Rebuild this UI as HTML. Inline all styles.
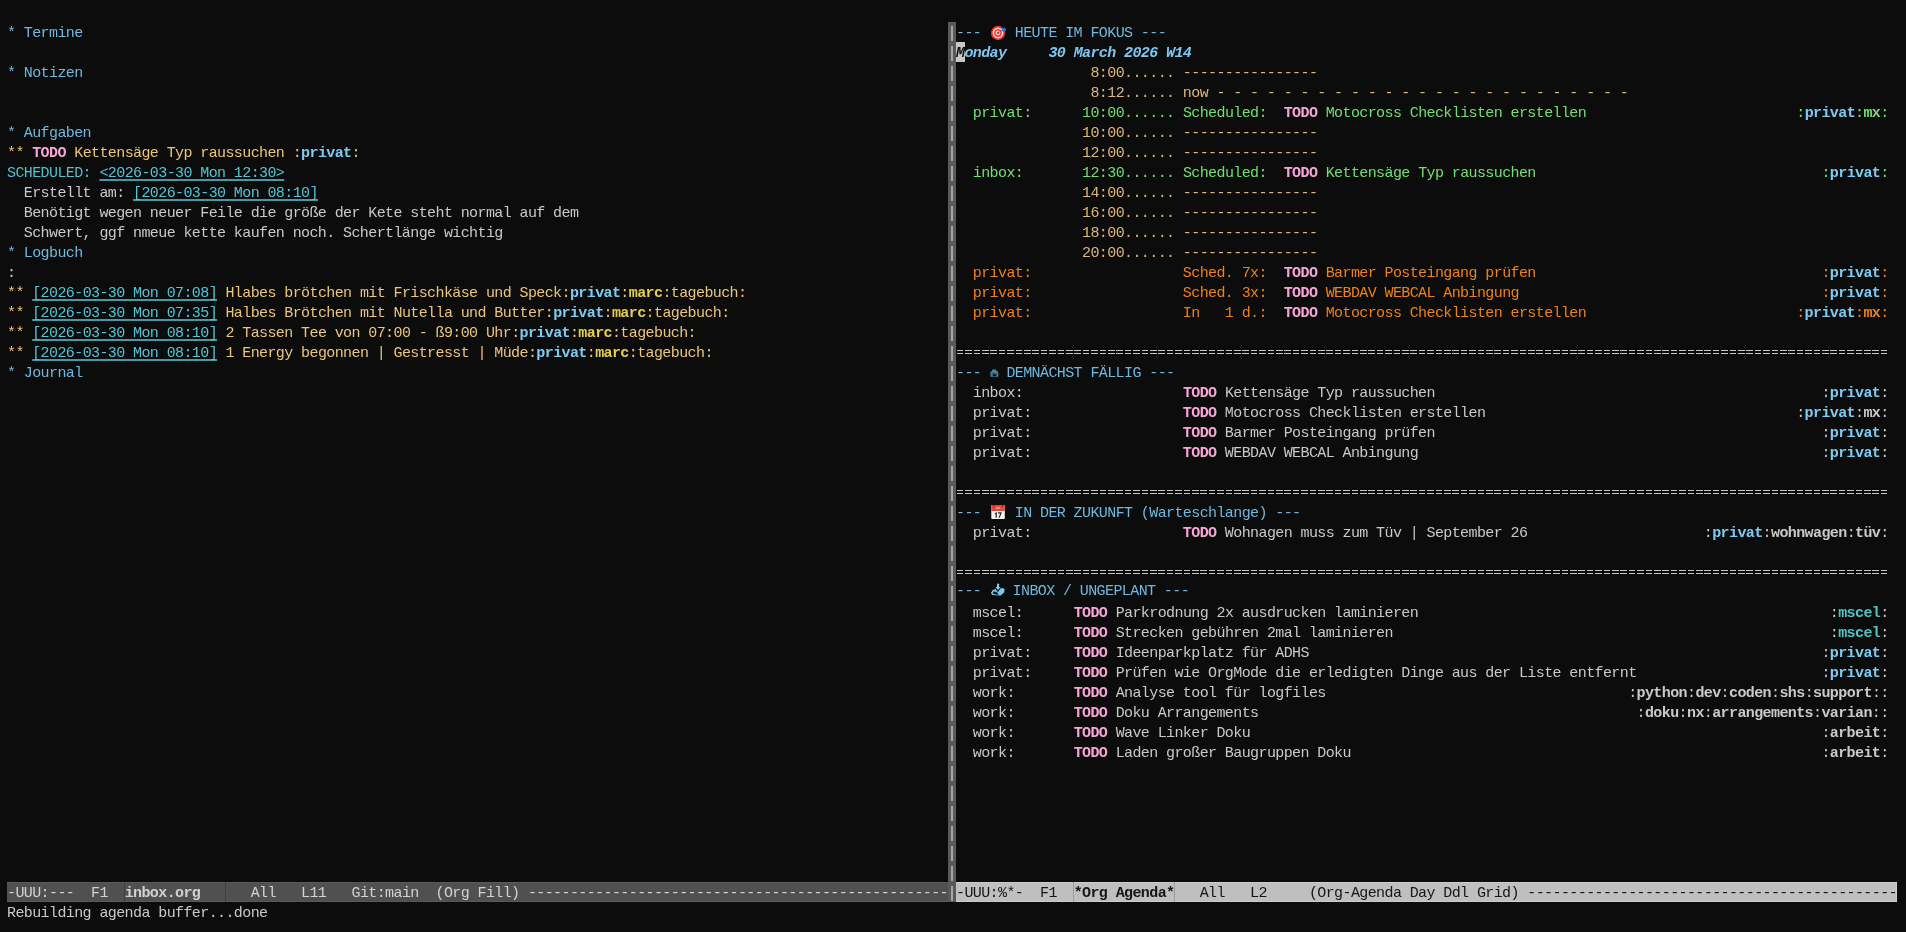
<!DOCTYPE html>
<html><head><meta charset="utf-8"><style>
html,body{margin:0;padding:0;}
body{width:1906px;height:932px;overflow:hidden;background:#0c0c0c;position:relative;font-family:"Liberation Mono",monospace;}
.row{position:absolute;will-change:transform;height:20px;line-height:20px;white-space:pre;font-size:15px;letter-spacing:-0.6px;color:#c9c9c9;padding-top:2px;box-sizing:border-box;}
.emo{display:inline-block;height:20px;vertical-align:top;position:relative;}
.emo svg{position:absolute;left:0;top:-2px;}
.cur{background:#c8c8c8;color:#0c0c0c;font-weight:bold;font-style:italic;}
.eq{position:absolute;left:956px;width:932.4px;height:1px;background:repeating-linear-gradient(to right,transparent 0,transparent 0.9px,#c8c8c8 0.9px,#c8c8c8 7.5px,transparent 7.5px,transparent 8.4px);}
#div{position:absolute;left:948px;top:22px;width:8px;height:880px;background:#595959;}
.dseg{position:absolute;left:951px;width:2px;height:15px;background:#a6a6a6;}
.ml{position:absolute;top:882px;height:20px;}
#mlL{left:7px;width:941px;background:#505050;color:#d2d2d2;box-shadow:inset 0 1px #5a5a5a,inset 0 -1px #5a5a5a;}
#mlR{left:956px;width:941px;background:#bfbfbf;color:#161616;box-shadow:inset 0 1px #cccccc,inset 0 -1px #cccccc,inset -1px 0 #cccccc;}
.sep{position:absolute;top:0;width:1px;height:20px;}
#mlL .sep{background:#404040;}
#mlR .sep{background:#9c9c9c;}
</style></head><body>
<div style="position:absolute;left:956px;top:42px;width:9px;height:20px;background:#c8c8c8"></div>
<div class="row" style="top:22px;left:7px;"><span style="color:#6fb8df">* Termine</span></div>
<div class="row" style="top:62px;left:7px;"><span style="color:#6fb8df">* Notizen</span></div>
<div class="row" style="top:122px;left:7px;"><span style="color:#6fb8df">* Aufgaben</span></div>
<div class="row" style="top:142px;left:7px;"><span style="color:#ecc679">** </span><span style="color:#f7a6d6;font-weight:bold">TODO</span><span style="color:#ecc679"> Kettensäge Typ raussuchen </span><span style="color:#ecc679">:</span><span style="color:#7ccbf3;font-weight:bold">privat</span><span style="color:#ecc679">:</span></div>
<div class="row" style="top:162px;left:7px;"><span style="color:#4ec2ce">SCHEDULED:</span> <span style="color:#52c6d6;text-decoration:underline;text-decoration-thickness:2px;text-underline-offset:2px;text-decoration-color:#3f9ca9;text-decoration-skip-ink:none">&lt;2026-03-30 Mon 12:30&gt;</span></div>
<div class="row" style="top:182px;left:7px;"><span style="color:#c9c9c9">  Erstellt am: </span><span style="color:#52c6d6;text-decoration:underline;text-decoration-thickness:2px;text-underline-offset:2px;text-decoration-color:#3f9ca9;text-decoration-skip-ink:none">[2026-03-30 Mon 08:10]</span></div>
<div class="row" style="top:202px;left:7px;"><span style="color:#c9c9c9">  Benötigt wegen neuer Feile die größe der Kete steht normal auf dem</span></div>
<div class="row" style="top:222px;left:7px;"><span style="color:#c9c9c9">  Schwert, ggf nmeue kette kaufen noch. Schertlänge wichtig</span></div>
<div class="row" style="top:242px;left:7px;"><span style="color:#6fb8df">* Logbuch</span></div>
<div class="row" style="top:262px;left:7px;"><span style="color:#c9c9c9">:</span></div>
<div class="row" style="top:282px;left:7px;"><span style="color:#ecc679">** </span><span style="color:#52c6d6;text-decoration:underline;text-decoration-thickness:2px;text-underline-offset:2px;text-decoration-color:#3f9ca9;text-decoration-skip-ink:none">[2026-03-30 Mon 07:08]</span><span style="color:#ecc679"> Hlabes brötchen mit Frischkäse und Speck</span><span style="color:#ecc679">:</span><span style="color:#7ccbf3;font-weight:bold">privat</span><span style="color:#ecc679">:</span><span style="color:#e6cf4c;font-weight:bold">marc</span><span style="color:#ecc679">:tagebuch:</span></div>
<div class="row" style="top:302px;left:7px;"><span style="color:#ecc679">** </span><span style="color:#52c6d6;text-decoration:underline;text-decoration-thickness:2px;text-underline-offset:2px;text-decoration-color:#3f9ca9;text-decoration-skip-ink:none">[2026-03-30 Mon 07:35]</span><span style="color:#ecc679"> Halbes Brötchen mit Nutella und Butter</span><span style="color:#ecc679">:</span><span style="color:#7ccbf3;font-weight:bold">privat</span><span style="color:#ecc679">:</span><span style="color:#e6cf4c;font-weight:bold">marc</span><span style="color:#ecc679">:tagebuch:</span></div>
<div class="row" style="top:322px;left:7px;"><span style="color:#ecc679">** </span><span style="color:#52c6d6;text-decoration:underline;text-decoration-thickness:2px;text-underline-offset:2px;text-decoration-color:#3f9ca9;text-decoration-skip-ink:none">[2026-03-30 Mon 08:10]</span><span style="color:#ecc679"> 2 Tassen Tee von 07:00 - ß9:00 Uhr</span><span style="color:#ecc679">:</span><span style="color:#7ccbf3;font-weight:bold">privat</span><span style="color:#ecc679">:</span><span style="color:#e6cf4c;font-weight:bold">marc</span><span style="color:#ecc679">:tagebuch:</span></div>
<div class="row" style="top:342px;left:7px;"><span style="color:#ecc679">** </span><span style="color:#52c6d6;text-decoration:underline;text-decoration-thickness:2px;text-underline-offset:2px;text-decoration-color:#3f9ca9;text-decoration-skip-ink:none">[2026-03-30 Mon 08:10]</span><span style="color:#ecc679"> 1 Energy begonnen | Gestresst | Müde</span><span style="color:#ecc679">:</span><span style="color:#7ccbf3;font-weight:bold">privat</span><span style="color:#ecc679">:</span><span style="color:#e6cf4c;font-weight:bold">marc</span><span style="color:#ecc679">:tagebuch:</span></div>
<div class="row" style="top:362px;left:7px;"><span style="color:#6fb8df">* Journal</span></div>
<div class="row" style="top:22px;left:956px;"><span style="color:#6fb8df">--- </span><span class="emo" style="width:16.8px"><svg width="17" height="20" viewBox="0 0 17 20"><circle cx="8" cy="11" r="7.2" fill="#e8302c"/><circle cx="8" cy="11" r="5.4" fill="#ffd6d6"/><circle cx="8" cy="11" r="3.9" fill="#f0403a"/><circle cx="8" cy="11" r="2.4" fill="#ffd0d0"/><circle cx="8" cy="11" r="1.3" fill="#e8403a"/><line x1="8.5" y1="10.5" x2="13" y2="8" stroke="#4a6fa0" stroke-width="1"/><circle cx="14" cy="7.8" r="2.1" fill="#1f78d8"/></svg></span><span style="color:#6fb8df"> HEUTE IM FOKUS ---</span></div>
<div class="row" style="top:42px;left:956px;"><span style="color:#0c0c0c;font-weight:bold;font-style:italic">M</span><span style="color:#7cc8f2;font-weight:bold;font-style:italic">onday     30 March 2026 W14</span></div>
<div class="row" style="top:62px;left:956px;">                <span style="color:#dcb878">8:00......</span> <span style="color:#dcb878">----------------</span></div>
<div class="row" style="top:82px;left:956px;">                <span style="color:#dcb878">8:12......</span> <span style="color:#dcb878">now - - - - - - - - - - - - - - - - - - - - - - - - -</span></div>
<div class="row" style="top:102px;left:956px;">  <span style="color:#70e070">privat:</span>      <span style="color:#70e070">10:00......</span> <span style="color:#70e070">Scheduled:</span>  <span style="color:#f7a6d6;font-weight:bold">TODO</span><span style="color:#70e070"> Motocross Checklisten erstellen</span>                         <span style="color:#70e070">:</span><span style="color:#7ccbf3;font-weight:bold">privat</span><span style="color:#70e070">:</span><span style="color:#70e070;font-weight:bold">mx</span><span style="color:#70e070">:</span></div>
<div class="row" style="top:122px;left:956px;">               <span style="color:#dcb878">10:00......</span> <span style="color:#dcb878">----------------</span></div>
<div class="row" style="top:142px;left:956px;">               <span style="color:#dcb878">12:00......</span> <span style="color:#dcb878">----------------</span></div>
<div class="row" style="top:162px;left:956px;">  <span style="color:#70e070">inbox:</span>       <span style="color:#70e070">12:30......</span> <span style="color:#70e070">Scheduled:</span>  <span style="color:#f7a6d6;font-weight:bold">TODO</span><span style="color:#70e070"> Kettensäge Typ raussuchen</span>                                  <span style="color:#70e070">:</span><span style="color:#7ccbf3;font-weight:bold">privat</span><span style="color:#70e070">:</span></div>
<div class="row" style="top:182px;left:956px;">               <span style="color:#dcb878">14:00......</span> <span style="color:#dcb878">----------------</span></div>
<div class="row" style="top:202px;left:956px;">               <span style="color:#dcb878">16:00......</span> <span style="color:#dcb878">----------------</span></div>
<div class="row" style="top:222px;left:956px;">               <span style="color:#dcb878">18:00......</span> <span style="color:#dcb878">----------------</span></div>
<div class="row" style="top:242px;left:956px;">               <span style="color:#dcb878">20:00......</span> <span style="color:#dcb878">----------------</span></div>
<div class="row" style="top:262px;left:956px;">  <span style="color:#f08214">privat:</span>                  <span style="color:#f08214">Sched. 7x:</span>  <span style="color:#f7a6d6;font-weight:bold">TODO</span><span style="color:#f08214"> Barmer Posteingang prüfen</span>                                  <span style="color:#f08214">:</span><span style="color:#7ccbf3;font-weight:bold">privat</span><span style="color:#f08214">:</span></div>
<div class="row" style="top:282px;left:956px;">  <span style="color:#f08214">privat:</span>                  <span style="color:#f08214">Sched. 3x:</span>  <span style="color:#f7a6d6;font-weight:bold">TODO</span><span style="color:#f08214"> WEBDAV WEBCAL Anbingung</span>                                    <span style="color:#f08214">:</span><span style="color:#7ccbf3;font-weight:bold">privat</span><span style="color:#f08214">:</span></div>
<div class="row" style="top:302px;left:956px;">  <span style="color:#f08214">privat:</span>                  <span style="color:#f08214">In   1 d.:</span>  <span style="color:#f7a6d6;font-weight:bold">TODO</span><span style="color:#f08214"> Motocross Checklisten erstellen</span>                         <span style="color:#f08214">:</span><span style="color:#7ccbf3;font-weight:bold">privat</span><span style="color:#f08214">:</span><span style="color:#f08214;font-weight:bold">mx</span><span style="color:#f08214">:</span></div>
<div class="row" style="top:362px;left:956px;"><span style="color:#6fb8df">--- </span><span class="emo" style="width:8.4px"><svg width="9" height="20" viewBox="0 0 9 20" style="overflow:visible"><path d="M0.5 14.4 L0.4 10.4 C0.5 9.4 1.3 9.1 1.9 9.5 L2.5 7.5 C2.7 6.7 3.3 6.7 3.5 7.5 L4.1 8.7 L4.5 7.3 C4.7 6.6 5.3 6.6 5.5 7.3 L6.1 9.5 L6.7 8.3 C7.6 9.1 8.3 10.4 8.3 11.6 L8.3 14.2 C8.3 14.6 8 14.8 7.6 14.8 L1.1 14.8 Z" fill="#4f8aaa"/><path d="M1.5 13.9 L1.5 10.6 L7.3 10.6 L7.3 13.9 Z" fill="#1c3440" opacity="0.55"/><path d="M2.8 14.2 C3 12.7 3.8 12 4.5 12 C5.2 12 6 12.7 6.2 14.2 Z" fill="#0c0c0c"/></svg></span><span style="color:#6fb8df"> DEMNÄCHST FÄLLIG ---</span></div>
<div class="row" style="top:382px;left:956px;">  <span style="color:#c9c9c9">inbox:</span>                   <span style="color:#f7a6d6;font-weight:bold">TODO</span><span style="color:#c9c9c9"> Kettensäge Typ raussuchen</span>                                              <span style="color:#c9c9c9">:</span><span style="color:#7ccbf3;font-weight:bold">privat</span><span style="color:#c9c9c9">:</span></div>
<div class="row" style="top:402px;left:956px;">  <span style="color:#c9c9c9">privat:</span>                  <span style="color:#f7a6d6;font-weight:bold">TODO</span><span style="color:#c9c9c9"> Motocross Checklisten erstellen</span>                                     <span style="color:#c9c9c9">:</span><span style="color:#7ccbf3;font-weight:bold">privat</span><span style="color:#c9c9c9">:</span><span style="color:#c9c9c9;font-weight:bold">mx</span><span style="color:#c9c9c9">:</span></div>
<div class="row" style="top:422px;left:956px;">  <span style="color:#c9c9c9">privat:</span>                  <span style="color:#f7a6d6;font-weight:bold">TODO</span><span style="color:#c9c9c9"> Barmer Posteingang prüfen</span>                                              <span style="color:#c9c9c9">:</span><span style="color:#7ccbf3;font-weight:bold">privat</span><span style="color:#c9c9c9">:</span></div>
<div class="row" style="top:442px;left:956px;">  <span style="color:#c9c9c9">privat:</span>                  <span style="color:#f7a6d6;font-weight:bold">TODO</span><span style="color:#c9c9c9"> WEBDAV WEBCAL Anbingung</span>                                                <span style="color:#c9c9c9">:</span><span style="color:#7ccbf3;font-weight:bold">privat</span><span style="color:#c9c9c9">:</span></div>
<div class="row" style="top:502px;left:956px;"><span style="color:#6fb8df">--- </span><span class="emo" style="width:16.8px"><svg width="17" height="20" viewBox="0 0 17 20"><rect x="1.3" y="3" width="13.5" height="14" rx="0.8" fill="#f4f4f4"/><path d="M1.3 3.8 Q1.3 3 2.1 3 L14 3 Q14.8 3 14.8 3.8 L14.8 9 L1.3 9 Z" fill="#e8443a"/><rect x="3.3" y="3" width="0.8" height="1.8" fill="#6a1a14"/><rect x="12" y="3" width="0.8" height="1.8" fill="#6a1a14"/><rect x="5.8" y="5.4" width="4.4" height="1.3" fill="#f3b0aa"/><path d="M4.6 11.4 L6.2 10.3 L6.8 10.3 L6.8 15.7 L5.6 15.7 L5.6 11.8 L4.8 12.3 Z" fill="#222"/><path d="M8 10.3 L11.6 10.3 L11.6 11.2 L9.6 15.7 L8.4 15.7 L10.3 11.4 L8 11.4 Z" fill="#222"/></svg></span><span style="color:#6fb8df"> IN DER ZUKUNFT (Warteschlange) ---</span></div>
<div class="row" style="top:522px;left:956px;">  <span style="color:#c9c9c9">privat:</span>                  <span style="color:#f7a6d6;font-weight:bold">TODO</span><span style="color:#c9c9c9"> Wohnagen muss zum Tüv | September 26</span>                     <span style="color:#c9c9c9">:</span><span style="color:#7ccbf3;font-weight:bold">privat</span><span style="color:#c9c9c9">:</span><span style="color:#c9c9c9;font-weight:bold">wohnwagen</span><span style="color:#c9c9c9">:</span><span style="color:#c9c9c9;font-weight:bold">tüv</span><span style="color:#c9c9c9">:</span></div>
<div class="row" style="top:582px;left:956px;margin-top:-2px;"><span style="color:#6fb8df">--- </span><span class="emo" style="width:14.6px"><svg width="17" height="20" viewBox="0 0 17 20"><path d="M0.9 13.1 L3 9.8 L5.6 9 L7.9 12.2 L10.4 8.6 L12.9 8.1 L14.6 9.3 L14.2 12.5 L10.6 15.5 L2.3 15 Z" fill="#78c8ef"/><path d="M2.6 13.2 C3.6 11.6 5.5 11.3 7 12.4 C7.8 13 8.4 13.6 8.7 14.4 C6.5 14.6 4.2 14.3 2.6 13.2 Z" fill="#0c0c0c"/><rect x="7" y="3.4" width="2.1" height="4" rx="0.8" fill="#80d0f8"/><path d="M5.3 7 L10.6 7 L7.95 10 Z" fill="#80d0f8"/><path d="M3.5 11 L6 12.8" stroke="#10202a" stroke-width="0.5"/></svg></span><span style="color:#6fb8df"> INBOX / UNGEPLANT ---</span></div>
<div class="row" style="top:602px;left:956px;">  <span style="color:#c9c9c9">mscel:</span>      <span style="color:#f7a6d6;font-weight:bold">TODO</span><span style="color:#c9c9c9"> Parkrodnung 2x ausdrucken laminieren</span>                                                 <span style="color:#c9c9c9">:</span><span style="color:#4ec4c4;font-weight:bold">mscel</span><span style="color:#c9c9c9">:</span></div>
<div class="row" style="top:622px;left:956px;">  <span style="color:#c9c9c9">mscel:</span>      <span style="color:#f7a6d6;font-weight:bold">TODO</span><span style="color:#c9c9c9"> Strecken gebühren 2mal laminieren</span>                                                    <span style="color:#c9c9c9">:</span><span style="color:#4ec4c4;font-weight:bold">mscel</span><span style="color:#c9c9c9">:</span></div>
<div class="row" style="top:642px;left:956px;">  <span style="color:#c9c9c9">privat:</span>     <span style="color:#f7a6d6;font-weight:bold">TODO</span><span style="color:#c9c9c9"> Ideenparkplatz für ADHS</span>                                                             <span style="color:#c9c9c9">:</span><span style="color:#7ccbf3;font-weight:bold">privat</span><span style="color:#c9c9c9">:</span></div>
<div class="row" style="top:662px;left:956px;">  <span style="color:#c9c9c9">privat:</span>     <span style="color:#f7a6d6;font-weight:bold">TODO</span><span style="color:#c9c9c9"> Prüfen wie OrgMode die erledigten Dinge aus der Liste entfernt</span>                      <span style="color:#c9c9c9">:</span><span style="color:#7ccbf3;font-weight:bold">privat</span><span style="color:#c9c9c9">:</span></div>
<div class="row" style="top:682px;left:956px;">  <span style="color:#c9c9c9">work:</span>       <span style="color:#f7a6d6;font-weight:bold">TODO</span><span style="color:#c9c9c9"> Analyse tool für logfiles</span>                                    <span style="color:#c9c9c9">:</span><span style="color:#c9c9c9;font-weight:bold">python</span><span style="color:#c9c9c9">:</span><span style="color:#c9c9c9;font-weight:bold">dev</span><span style="color:#c9c9c9">:</span><span style="color:#c9c9c9;font-weight:bold">coden</span><span style="color:#c9c9c9">:</span><span style="color:#c9c9c9;font-weight:bold">shs</span><span style="color:#c9c9c9">:</span><span style="color:#c9c9c9;font-weight:bold">support</span><span style="color:#c9c9c9">:</span><span style="color:#c9c9c9;font-weight:bold"></span><span style="color:#c9c9c9">:</span></div>
<div class="row" style="top:702px;left:956px;">  <span style="color:#c9c9c9">work:</span>       <span style="color:#f7a6d6;font-weight:bold">TODO</span><span style="color:#c9c9c9"> Doku Arrangements</span>                                             <span style="color:#c9c9c9">:</span><span style="color:#c9c9c9;font-weight:bold">doku</span><span style="color:#c9c9c9">:</span><span style="color:#c9c9c9;font-weight:bold">nx</span><span style="color:#c9c9c9">:</span><span style="color:#c9c9c9;font-weight:bold">arrangements</span><span style="color:#c9c9c9">:</span><span style="color:#c9c9c9;font-weight:bold">varian</span><span style="color:#c9c9c9">:</span><span style="color:#c9c9c9;font-weight:bold"></span><span style="color:#c9c9c9">:</span></div>
<div class="row" style="top:722px;left:956px;">  <span style="color:#c9c9c9">work:</span>       <span style="color:#f7a6d6;font-weight:bold">TODO</span><span style="color:#c9c9c9"> Wave Linker Doku</span>                                                                    <span style="color:#c9c9c9">:</span><span style="color:#c9c9c9;font-weight:bold">arbeit</span><span style="color:#c9c9c9">:</span></div>
<div class="row" style="top:742px;left:956px;">  <span style="color:#c9c9c9">work:</span>       <span style="color:#f7a6d6;font-weight:bold">TODO</span><span style="color:#c9c9c9"> Laden großer Baugruppen Doku</span>                                                        <span style="color:#c9c9c9">:</span><span style="color:#c9c9c9;font-weight:bold">arbeit</span><span style="color:#c9c9c9">:</span></div>
<div id="div"></div>
<div class="dseg" style="top:26px"></div>
<div class="dseg" style="top:46px"></div>
<div class="dseg" style="top:66px"></div>
<div class="dseg" style="top:86px"></div>
<div class="dseg" style="top:106px"></div>
<div class="dseg" style="top:126px"></div>
<div class="dseg" style="top:146px"></div>
<div class="dseg" style="top:166px"></div>
<div class="dseg" style="top:186px"></div>
<div class="dseg" style="top:206px"></div>
<div class="dseg" style="top:226px"></div>
<div class="dseg" style="top:246px"></div>
<div class="dseg" style="top:266px"></div>
<div class="dseg" style="top:286px"></div>
<div class="dseg" style="top:306px"></div>
<div class="dseg" style="top:326px"></div>
<div class="dseg" style="top:346px"></div>
<div class="dseg" style="top:366px"></div>
<div class="dseg" style="top:386px"></div>
<div class="dseg" style="top:406px"></div>
<div class="dseg" style="top:426px"></div>
<div class="dseg" style="top:446px"></div>
<div class="dseg" style="top:466px"></div>
<div class="dseg" style="top:486px"></div>
<div class="dseg" style="top:506px"></div>
<div class="dseg" style="top:526px"></div>
<div class="dseg" style="top:546px"></div>
<div class="dseg" style="top:566px"></div>
<div class="dseg" style="top:586px"></div>
<div class="dseg" style="top:606px"></div>
<div class="dseg" style="top:626px"></div>
<div class="dseg" style="top:646px"></div>
<div class="dseg" style="top:666px"></div>
<div class="dseg" style="top:686px"></div>
<div class="dseg" style="top:706px"></div>
<div class="dseg" style="top:726px"></div>
<div class="dseg" style="top:746px"></div>
<div class="dseg" style="top:766px"></div>
<div class="dseg" style="top:786px"></div>
<div class="dseg" style="top:806px"></div>
<div class="dseg" style="top:826px"></div>
<div class="dseg" style="top:846px"></div>
<div class="dseg" style="top:866px"></div>
<div class="dseg" style="top:886px"></div>
<div class="eq" style="top:350px"></div>
<div class="eq" style="top:353px"></div>
<div class="eq" style="top:490px"></div>
<div class="eq" style="top:493px"></div>
<div class="eq" style="top:570px"></div>
<div class="eq" style="top:573px"></div>
<div class="ml" id="mlL"><div class="sep" style="left:117px"></div><div class="sep" style="left:218px"></div></div>
<div class="ml" id="mlR"><div class="sep" style="left:117px"></div><div class="sep" style="left:218px"></div></div>
<div class="row" style="top:882px;left:7px;color:#d2d2d2">-UUU:---  F1  <b>inbox.org</b>      All   L11   Git:main  (Org Fill) --------------------------------------------------</div>
<div class="row" style="top:882px;left:956px;color:#161616">-UUU:%*-  F1  <b>*Org Agenda*</b>   All   L2     (Org-Agenda Day Ddl Grid) --------------------------------------------</div>
<div class="row" style="top:902px;left:7px;">Rebuilding agenda buffer...done</div>
</body></html>
